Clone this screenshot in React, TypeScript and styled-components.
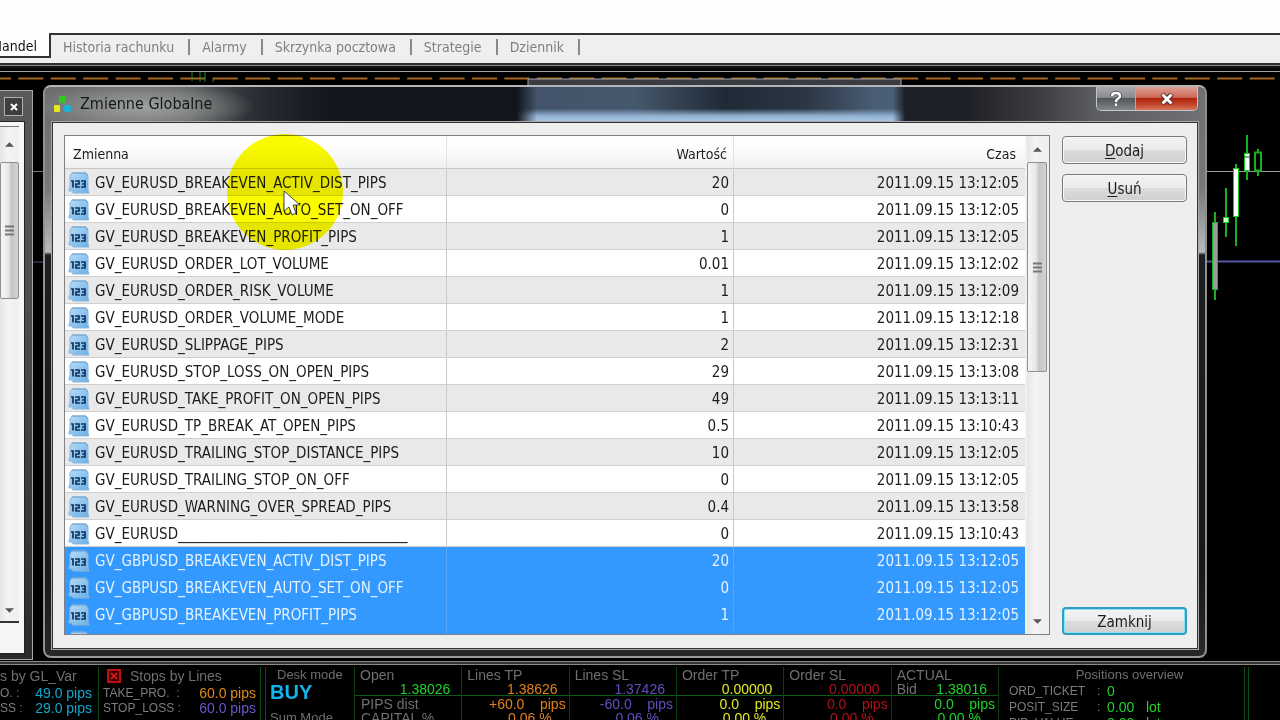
import React from "react";
import styled, { createGlobalStyle, css } from "styled-components";

const Global = createGlobalStyle`
  *, *::before, *::after { box-sizing: border-box; }
  body { margin: 0; background: #000; }
  button { font: inherit; color: inherit; padding: 0; }
`;

const ui = `"DejaVu Sans Condensed", "Noto Sans", sans-serif`;
const chartFont = `"Liberation Sans", sans-serif`;

const Page = styled.main`
  display: flex;
  flex-direction: column;
  height: 100vh;
  overflow: hidden;
  background: #000;
  font-family: ${ui};
  font-size: 15px;
  color: #1c1c1c;
`;

/* ---------- terminal tabs ---------- */

const TerminalBody = styled.div`
  flex: none;
  height: 33px;
  background: #fefefe;
`;

const TabBar = styled.nav`
  flex: none;
  display: flex;
  align-items: flex-start;
  height: 30px;
  background: #efefef;
`;

const TabRest = styled.div`
  flex: 1;
  display: flex;
  align-items: flex-start;
  height: 29px;
  padding-top: 4px;
  border-top: 2px solid #333;
`;

const Tab = styled.button<{ $active?: boolean }>`
  border: 0;
  background: none;
  font-size: 14px;
  line-height: 20px;
  white-space: nowrap;
  color: #808080;
  padding: 0 14px 0 12px;
  border-right: 2px solid #8a8a8a;
  height: 16px;
  display: flex;
  align-items: center;
  ${(p) =>
    p.$active &&
    css`
      justify-content: flex-end;
      width: 51px;
      height: 25px;
      padding: 2px 12px 0 0;
      color: #111;
      background: #fff;
      border-right: 2px solid #333;
      border-bottom: 2px solid #333;
    `}
`;

const Splitter = styled.div`
  flex: none;
  height: 9px;
  border-top: 2px solid #2e2e2e;
  border-bottom: 1px solid #a0a0a0;
  background: linear-gradient(#8a8a8a 0 1px, #1a1a1a 1px, #000);
`;

/* ---------- workspace ---------- */

const Workspace = styled.div`
  position: relative;
  flex: 1;
  min-height: 0;
  display: flex;
  gap: 10px;
  padding: 13px 73px 3px 0;
  background: #000;
`;

const ChartArt = styled.svg`
  position: absolute;
  top: 0;
  right: 0;
  width: 100%;
  height: 100%;
`;

const RightArt = styled.svg`
  position: absolute;
  top: 0;
  right: 0;
  width: 80px;
  height: 300px;
`;

const SidePanel = styled.aside`
  position: relative;
  flex: none;
  display: flex;
  flex-direction: column;
  width: 33px;
  margin-top: 5px;
  margin-bottom: -2px;
  padding: 6px 7px 5px 0;
  background: linear-gradient(#5a5a5c, #4c4c4e 40%, #2a2a2c);
  border: 1px solid #a9a9a9;
  border-left: 0;
`;

const SideClose = styled.button`
  width: 19px;
  height: 19px;
  margin: 0 0 5px 4px;
  flex: none;
  border: 1px solid #b0b0b0;
  background: #3e3e40;
  display: grid;
  place-items: center;
`;

const SideBody = styled.div`
  flex: 1;
  display: flex;
  flex-direction: column;
  background: #f6f6f6;
  border: 1px solid #222;
  border-left: 0;
  padding: 4px 5px 30px 0;
`;

const Track = styled.div<{ $line?: boolean }>`
  display: flex;
  flex-direction: column;
  align-items: stretch;
  flex: 1;
  background: linear-gradient(90deg, #e6e6e6, #f3f3f3 40%, #efefef);
  ${(p) => p.$line && "border-top: 1px solid #777; border-bottom: 2px solid #333;"}
`;

const Arrow = styled.button<{ $h: number }>`
  flex: none;
  height: ${(p) => p.$h}px;
  border: 0;
  background: none;
  display: grid;
  place-items: center;
`;

const Thumb = styled.div<{ $h: number }>`
  flex: none;
  height: ${(p) => p.$h}px;
  display: grid;
  place-items: center;
  border: 1px solid #8f8f8f;
  border-radius: 2px;
  background: linear-gradient(90deg, #f7f7f7, #e6e6e8 45%, #c6c6ca 60%, #d2d2d5);
`;

const Spacer = styled.div`
  flex: 1;
`;

/* ---------- dialog ---------- */

const Dialog = styled.section`
  position: relative;
  flex: 1;
  min-width: 0;
  display: flex;
  flex-direction: column;
  padding: 0 7px 7px;
  border: 2px solid #b5b5b7;
  border-color: #b5b5b7 #8f8f92 #9a9a9c #909093;
  border-radius: 8px;
  background: linear-gradient(#6c6d70 0, #77787b 100px, #b9babc 165px, #1c1e22 168px, #17181b 85%, #28282a);
`;

const Glass = styled.div`
  position: absolute;
  inset: 0 0 auto 0;
  height: 36px;
  border-radius: 6px 6px 0 0;
  overflow: hidden;
  background:
    radial-gradient(ellipse 110px 26px at 100px 20px, rgba(180, 184, 180, 0.75), rgba(160, 165, 160, 0.45) 60%, transparent),
    linear-gradient(90deg, #6e6f71 0, #5b5c5e 140px, #2a2d33 210px, #14171e 280px, #12151c 472px, transparent 492px),
    linear-gradient(270deg, #707173 0, #5c5d60 110px, #3a3b3e 170px, #1e2027 240px, #1c2029 300px, transparent 312px),
    linear-gradient(transparent 60%, #8fb0d0 80%, #a9c8e6 95%),
    linear-gradient(90deg, #43546a 490px, #46586c 590px, #1f2a36 680px, #2a3644 760px, #4a5e74 830px);
`;

const TitleBar = styled.header`
  position: relative;
  display: flex;
  align-items: flex-start;
  height: 35px;
  flex: none;
`;

const TitleIcon = styled.svg`
  width: 19px;
  height: 19px;
  margin: 8px 8px 0 1px;
`;

const Title = styled.h1`
  flex: 1;
  margin: 6px 0 0;
  font-size: 16px;
  line-height: 22px;
  font-weight: 400;
  color: #15171a;
`;

const Caption = styled.div`
  display: flex;
  height: 24px;
  border: 1px solid #c4c4c6;
  border-top: 0;
  border-radius: 0 0 5px 5px;
  overflow: hidden;
`;

const CaptionButton = styled.button<{ $close?: boolean }>`
  border: 0;
  width: ${(p) => (p.$close ? 62 : 38)}px;
  display: grid;
  place-items: center;
  ${(p) =>
    p.$close
      ? "background: linear-gradient(#dda094, #cc6a58 45%, #b0230c 50%, #c04429 75%, #d9755c); border-left: 1px solid #c9a09a;"
      : "background: linear-gradient(#a6a8aa, #8a8c8f 45%, #54575b 50%, #6e7276 80%, #84888b);"}
`;

const Client = styled.div`
  position: relative;
  flex: 1;
  min-height: 0;
  display: flex;
  gap: 12px;
  padding: 12px 10px 13px 11px;
  border: 1px solid #333;
  outline: 1px solid #a8a8aa;
  background: #eeeeef;
`;

const ListBox = styled.div`
  flex: 1;
  min-width: 0;
  display: flex;
  border: 1px solid #7f8187;
  background: #f1f1f2;
  padding-right: 2px;
`;

const TableClip = styled.div`
  flex: 1;
  min-width: 0;
  overflow: hidden;
`;

const Table = styled.table`
  width: 100%;
  table-layout: fixed;
  border-collapse: separate;
  border-spacing: 0;
`;

const NameCol = styled.col`
  width: 382px;
`;

const ValueCol = styled.col`
  width: 287px;
`;

const Head = styled.th<{ $right?: boolean }>`
  height: 33px;
  padding: 3px 6px 0 8px;
  font-weight: 400;
  font-size: 14px;
  text-align: ${(p) => (p.$right ? "right" : "left")};
  background: linear-gradient(#fff, #fdfdfd 40%, #f0f0f1);
  border-right: 1px solid #e2e2e4;
  border-bottom: 1px solid #c6c6c8;
  &:last-child { border-right: 0; padding-right: 9px; }
`;

const Row = styled.tr<{ $selected?: boolean }>`
  background: #fff;
  &:nth-child(odd) { background: #e9e9ea; }
  ${(p) =>
    p.$selected &&
    css`
      &&& { background: #3399ff; }
      color: #e4f2ff;
    `}
`;

const Cell = styled.td<{ $right?: boolean; $selected?: boolean }>`
  height: 27px;
  padding: 2px 4px 0 3px;
  line-height: 20px;
  white-space: nowrap;
  text-align: ${(p) => (p.$right ? "right" : "left")};
  border-right: 1px solid ${(p) => (p.$selected ? "#55a8f8" : "#c9c9cb")};
  border-bottom: 1px solid ${(p) => (p.$selected ? "#3399ff" : "#cfcfd1")};
  &:last-child { border-right: 0; padding-right: 6px; }
`;

const NameBox = styled.div`
  display: flex;
  align-items: center;
  gap: 5px;
`;

const Scroll = styled.div`
  flex: none;
  display: flex;
  width: 22px;
  padding-left: 2px;
`;

const Actions = styled.div`
  flex: none;
  display: flex;
  flex-direction: column;
  gap: 10px;
  width: 125px;
  padding-top: 1px;
`;

const Action = styled.button<{ $default?: boolean }>`
  height: 28px;
  padding-top: 1px;
  font-size: 15px;
  line-height: 20px;
  border: ${(p) => (p.$default ? "2px solid #2f9fc4" : "1px solid #77787a")};
  border-radius: 4px;
  box-shadow: inset 0 0 0 1px ${(p) => (p.$default ? "#8fe3f7" : "#fafafa")};
  background: linear-gradient(#f3f3f3, #ebebeb 48%, #dcdcdd 52%, #d0d0d2);
  u { text-underline-offset: 2px; }
`;

/* ---------- indicator readout ---------- */

const Readout = styled.footer`
  flex: none;
  display: flex;
  height: 59px;
  padding-top: 5px;
  border-top: 1px solid #8a8a8a;
  overflow: hidden;
  font-family: ${chartFont};
  font-size: 14px;
  line-height: 16px;
  color: #6f6f6f;
  background: linear-gradient(#333 0 2px, #8a8a8a 2px 3px, #000 3px);
  white-space: nowrap;
`;

const Stops = styled.div<{ $first?: boolean }>`
  flex: none;
  width: ${(p) => (p.$first ? 99 : 162)}px;
  padding: 0 4px;
  ${(p) => p.$first && "padding: 0 6px 0 0;"}
  border-right: 1px solid #0b4d14;
`;

const GroupTitle = styled.div<{ $small?: boolean; $center?: boolean }>`
  display: flex;
  align-items: center;
  gap: 9px;
  justify-content: ${(p) => (p.$center ? "center" : "flex-start")};
  height: 17px;
  font-size: ${(p) => (p.$small ? 13 : 14)}px;
`;

const CloseMark = styled.svg`
  width: 14px;
  height: 14px;
  margin-left: 4px;
`;

const StopLine = styled.div`
  display: flex;
  justify-content: space-between;
  height: 15px;
  line-height: 18px;
  font-size: 12px;
  color: #7c7c7c;
`;

const Val = styled.span<{ $c: string }>`
  color: ${(p) => p.$c};
  font-size: 14px;
  white-space: pre;
`;

const Desk = styled.div`
  flex: none;
  width: 89px;
  margin-left: 4px;
  padding-left: 4px;
  border-left: 1px solid #0b4d14;
  font-size: 13px;
`;

const DeskTitle = styled(GroupTitle)`
  height: 15px;
  padding-left: 7px;
`;

const Mode = styled.div`
  height: 28px;
  font-size: 20px;
  line-height: 20px;
  font-weight: 700;
  color: #12b4ee;
`;

const Prices = styled.div`
  flex: 1;
  display: flex;
`;

const Price = styled.div`
  flex: 1;
  border-left: 1px solid #0b3f12;
  &:last-child { border-right: 1px solid #0b3f12; }
`;

const PriceTop = styled.div`
  height: 29px;
  padding: 0 11px 0 5px;
  border-bottom: 1px solid #0b5a16;
`;

const PriceRow = styled.div<{ $c?: string }>`
  display: flex;
  justify-content: ${(p) => (p.$c ? "flex-end" : "flex-start")};
  height: 14px;
  line-height: 16px;
  color: ${(p) => p.$c ?? "inherit"};
  white-space: pre;
`;

const Bid = styled.span`
  margin-right: auto;
  color: #6f6f6f;
`;

const PriceBottom = styled.div`
  padding: 0 3px 0 6px;
`;

const PercentRow = styled(PriceRow)`
  padding-right: 14px;
`;

const Positions = styled.div`
  flex: none;
  width: 246px;
  margin-right: 3px;
  padding-left: 10px;
  border-right: 1px solid #0b4d14;
`;

const PositionsTitle = styled(GroupTitle)`
  height: 15px;
  padding-left: 6px;
`;

const Margin = styled.div`
  flex: none;
  width: 32px;
  border-left: 1px solid #0b4d14;
`;

const PositionRow = styled.div`
  display: grid;
  grid-template-columns: 88px 10px auto;
  height: 16px;
  line-height: 18px;
  font-size: 12px;
  color: #7c7c7c;
`;

/* ---------- data ---------- */

const rows: [string, string, string][] = [
  ["GV_EURUSD_BREAKEVEN_ACTIV_DIST_PIPS", "20", "2011.09.15 13:12:05"],
  ["GV_EURUSD_BREAKEVEN_AUTO_SET_ON_OFF", "0", "2011.09.15 13:12:05"],
  ["GV_EURUSD_BREAKEVEN_PROFIT_PIPS", "1", "2011.09.15 13:12:05"],
  ["GV_EURUSD_ORDER_LOT_VOLUME", "0.01", "2011.09.15 13:12:02"],
  ["GV_EURUSD_ORDER_RISK_VOLUME", "1", "2011.09.15 13:12:09"],
  ["GV_EURUSD_ORDER_VOLUME_MODE", "1", "2011.09.15 13:12:18"],
  ["GV_EURUSD_SLIPPAGE_PIPS", "2", "2011.09.15 13:12:31"],
  ["GV_EURUSD_STOP_LOSS_ON_OPEN_PIPS", "29", "2011.09.15 13:13:08"],
  ["GV_EURUSD_TAKE_PROFIT_ON_OPEN_PIPS", "49", "2011.09.15 13:13:11"],
  ["GV_EURUSD_TP_BREAK_AT_OPEN_PIPS", "0.5", "2011.09.15 13:10:43"],
  ["GV_EURUSD_TRAILING_STOP_DISTANCE_PIPS", "10", "2011.09.15 13:12:05"],
  ["GV_EURUSD_TRAILING_STOP_ON_OFF", "0", "2011.09.15 13:12:05"],
  ["GV_EURUSD_WARNING_OVER_SPREAD_PIPS", "0.4", "2011.09.15 13:13:58"],
  ["GV_EURUSD" + "_".repeat(34), "0", "2011.09.15 13:10:43"],
  ["GV_GBPUSD_BREAKEVEN_ACTIV_DIST_PIPS", "20", "2011.09.15 13:12:05"],
  ["GV_GBPUSD_BREAKEVEN_AUTO_SET_ON_OFF", "0", "2011.09.15 13:12:05"],
  ["GV_GBPUSD_BREAKEVEN_PROFIT_PIPS", "1", "2011.09.15 13:12:05"],
  ["", "", ""],
];
const firstSelected = 14;

const prices = [
  { label: "Open", value: "1.38026", c: "#1fd32a" },
  { label: "Lines TP", value: "1.38626", c: "#e0801c", pips: "+60.0    pips", pct: "0.06 %" },
  { label: "Lines SL", value: "1.37426", c: "#5e4fc0", pips: "-60.0    pips", pct: "0.06 %" },
  { label: "Order TP", value: "0.00000", c: "#e2e81c", pips: "0.0    pips", pct: "0.00 %" },
  { label: "Order SL", value: "0.00000", c: "#b0101c", pips: "0.0    pips", pct: "0.00 %" },
  { label: "ACTUAL", value: "1.38016", c: "#1fd32a", pips: "0.0    pips", pct: "0.00 %", bid: true },
];

/* ---------- drawings ---------- */

const NumberIcon = () => (
  <svg width="22" height="22" viewBox="0 0 22 22" aria-hidden="true">
    <defs>
      <linearGradient id="page" x1="0" y1="0" x2="1" y2="1">
        <stop offset="0" stopColor="#b5dcf8" />
        <stop offset="1" stopColor="#6aaee4" />
      </linearGradient>
    </defs>
    <path d="M4 1H18L20 4V18L21 21H5L4 19H1V17L2 15V4Z" fill="url(#page)" stroke="#8ab6dc" />
    <path d="M4 1H18L20 4" fill="none" stroke="#6fa3d0" />
    <g fill="none" stroke="#12345c" strokeWidth="1.700">
      <path d="M3 9H5V15.500" />
      <path d="M7 9H11V12H8V15H12" />
      <path d="M13 9H17V15H13M14 12H17" />
    </g>
  </svg>
);

const ArrowGlyph = ({ down }: { down?: boolean }) => (
  <svg width="9" height="5" viewBox="0 0 10 5" aria-hidden="true">
    <path d={down ? "M0 0H10L5 5Z" : "M0 5H10L5 0Z"} fill="#555" />
  </svg>
);

const Grip = () => (
  <svg width="9" height="11" viewBox="0 0 9 11" aria-hidden="true">
    <path d="M0 1.500H9M0 5.500H9M0 9.500H9" stroke="#777" strokeWidth="2" />
  </svg>
);

const Halo = styled.svg`
  position: absolute;
  left: 181px;
  top: 46px;
  width: 118px;
  height: 118px;
  mix-blend-mode: multiply;
`;

const PointerArrow = styled.svg`
  position: absolute;
  left: 238px;
  top: 103px;
  width: 18px;
  height: 27px;
`;

export default function App() {
  return (
    <Page>
      <Global />
      <TerminalBody />
      <TabBar aria-label="Terminal">
        <Tab $active>Handel</Tab>
        <TabRest>
          {["Historia rachunku", "Alarmy", "Skrzynka pocztowa", "Strategie", "Dziennik"].map((t) => (
            <Tab key={t}>{t}</Tab>
          ))}
        </TabRest>
      </TabBar>
      <Splitter />
      <Workspace>
        <ChartArt aria-hidden="true">
          <path d="M0 6.500H2000" stroke="#a8661a" strokeWidth="2" strokeDasharray="25 7.400" strokeDashoffset="14" />
          <path d="M192 0V9M200 0V10M205 0V10M213 6V10" stroke="#1c8a2a" />
          <path d="M528 14V7H901V14" fill="#3a3c42" stroke="#a5a5a8" />
          <path d="M33 99.500H43" stroke="#777" />
          <path d="M33 190H43" stroke="#4a4a88" />
        </ChartArt>
        <RightArt viewBox="0 0 80 300" aria-hidden="true">
          <path d="M0 99.500H80" stroke="#999" />
          <path d="M0 189.500H80" stroke="#5555a8" strokeWidth="2" />
          <path d="M15 140V228M26 116V165M36 92V174M47 63V108M58 77V104" stroke="#17b01e" strokeWidth="2" />
          <rect x="12.500" y="150.500" width="5" height="67" fill="#9c9c9c" stroke="#17b01e" />
          <rect x="23.500" y="145.500" width="5" height="5" fill="#d8ffd8" stroke="#17d01e" />
          <rect x="33.500" y="96.500" width="5" height="48" fill="#fff" stroke="#17d01e" />
          <rect x="44.500" y="81.500" width="5" height="17" fill="#fff" stroke="#17d01e" />
          <path d="M44 85H50" stroke="#064a08" />
          <rect x="55" y="80.500" width="6" height="18" fill="#000" stroke="#17b01e" strokeWidth="2" />
        </RightArt>

        <SidePanel>
          <SideClose aria-label="Zamknij panel">
            <svg width="8" height="8" viewBox="0 0 8 8">
              <path d="M1 1L7 7M7 1L1 7" stroke="#fff" strokeWidth="2" />
            </svg>
          </SideClose>
          <SideBody>
            <Track $line>
              <Arrow $h={35} aria-label="W górę"><ArrowGlyph /></Arrow>
              <Thumb $h={137}><Grip /></Thumb>
              <Spacer />
              <Arrow $h={22} aria-label="W dół"><ArrowGlyph down /></Arrow>
            </Track>
          </SideBody>
        </SidePanel>

        <Dialog role="dialog" aria-labelledby="dialog-title">
          <Glass />
          <TitleBar>
            <TitleIcon viewBox="0 0 19 19" aria-hidden="true">
              <rect x="6" y="1" width="7" height="7" rx="1" fill="#2fc81c" />
              <rect x="1" y="10" width="6" height="7" rx="1" fill="#e8e81a" />
              <rect x="11" y="10" width="7" height="7" rx="2" fill="#18b4d8" />
            </TitleIcon>
            <Title id="dialog-title">Zmienne Globalne</Title>
            <Caption>
              <CaptionButton aria-label="Pomoc">
                <svg width="12" height="16" viewBox="0 0 12 16">
                  <path d="M2 5C2 1 10 1 10 5C10 8 6 7 6 11M6 12.500V15" fill="none" stroke="#444" strokeWidth="4" />
                  <path d="M2 5C2 1 10 1 10 5C10 8 6 7 6 11M6 12.500V15" fill="none" stroke="#fff" strokeWidth="2.500" />
                </svg>
              </CaptionButton>
              <CaptionButton $close aria-label="Zamknij okno">
                <svg width="14" height="12" viewBox="0 0 14 12">
                  <path d="M2 1L12 11M12 1L2 11" stroke="#5a2a2a" strokeWidth="5" />
                  <path d="M2.500 1.500L11.500 10.500M11.500 1.500L2.500 10.500" stroke="#fff" strokeWidth="3" />
                </svg>
              </CaptionButton>
            </Caption>
          </TitleBar>
          <Client>
            <ListBox>
              <TableClip>
                <Table>
                  <colgroup>
                    <NameCol />
                    <ValueCol />
                    <col />
                  </colgroup>
                  <thead>
                    <tr>
                      <Head>Zmienna</Head>
                      <Head $right>Wartość</Head>
                      <Head $right>Czas</Head>
                    </tr>
                  </thead>
                  <tbody>
                    {rows.map(([name, value, time], i) => {
                      const selected = i >= firstSelected;
                      return (
                        <Row key={i} $selected={selected}>
                          <Cell $selected={selected}>
                            <NameBox>
                              <NumberIcon />
                              {name}
                            </NameBox>
                          </Cell>
                          <Cell $right $selected={selected}>{value}</Cell>
                          <Cell $right $selected={selected}>{time}</Cell>
                        </Row>
                      );
                    })}
                  </tbody>
                </Table>
              </TableClip>
              <Scroll>
                <Track>
                  <Arrow $h={26} aria-label="Przewiń w górę"><ArrowGlyph /></Arrow>
                  <Thumb $h={210}><Grip /></Thumb>
                  <Spacer />
                  <Arrow $h={25} aria-label="Przewiń w dół"><ArrowGlyph down /></Arrow>
                </Track>
              </Scroll>
            </ListBox>
            <Actions>
              <Action><u>D</u>odaj</Action>
              <Action><u>U</u>suń</Action>
              <Spacer />
              <Action $default>Zamknij</Action>
            </Actions>
          </Client>
          <Halo viewBox="0 0 118 118" aria-hidden="true">
            <circle cx="59" cy="59" r="58" fill="#fbfb00" />
          </Halo>
          <PointerArrow viewBox="0 0 18 27" aria-hidden="true">
            <path d="M1 1V21L6 17L9 25L13 23L10 15H17Z" fill="#fff" stroke="#444" />
          </PointerArrow>
        </Dialog>
      </Workspace>

      <Readout>
        <Stops $first>
          <GroupTitle>s by GL_Var</GroupTitle>
          <StopLine><span>O. :</span><Val $c="#12a8cc">49.0 pips</Val></StopLine>
          <StopLine><span>SS :</span><Val $c="#12a8cc">29.0 pips</Val></StopLine>
        </Stops>
        <Stops>
          <GroupTitle>
            <CloseMark viewBox="0 0 14 14" aria-hidden="true">
              <rect x="1" y="1" width="12" height="12" fill="#3a0000" stroke="#c01010" strokeWidth="2" />
              <path d="M4 4L10 10M10 4L4 10" stroke="#d01818" strokeWidth="2" />
            </CloseMark>
            Stops by Lines
          </GroupTitle>
          <StopLine><span>TAKE_PRO. &nbsp;:</span><Val $c="#e08a1c">60.0 pips</Val></StopLine>
          <StopLine><span>STOP_LOSS :</span><Val $c="#6a55c8">60.0 pips</Val></StopLine>
        </Stops>
        <Desk>
          <DeskTitle $small>Desk mode</DeskTitle>
          <Mode>BUY</Mode>
          Sum Mode
        </Desk>
        <Prices>
          {prices.map((p) => (
            <Price key={p.label}>
              <PriceTop>
                <PriceRow>{p.label}</PriceRow>
                <PriceRow $c={p.c}>{p.bid && <Bid>Bid</Bid>}{p.value}</PriceRow>
              </PriceTop>
              <PriceBottom>
                <PriceRow $c={p.pips && p.c}>{p.pips ?? "PIPS dist"}</PriceRow>
                <PercentRow $c={p.pct && p.c}>{p.pct ?? "CAPITAL %"}</PercentRow>
              </PriceBottom>
            </Price>
          ))}
        </Prices>
        <Positions>
          <PositionsTitle $small $center>Positions overview</PositionsTitle>
          <PositionRow><span>ORD_TICKET</span><span>:</span><Val $c="#1fd32a">0</Val></PositionRow>
          <PositionRow><span>POSIT_SIZE</span><span>:</span><Val $c="#1fd32a">0.00   lot</Val></PositionRow>
          <PositionRow><span>PIP_VALUE</span><span>:</span><Val $c="#1fd32a">0.00   lot</Val></PositionRow>
        </Positions>
        <Margin />
      </Readout>
    </Page>
  );
}
